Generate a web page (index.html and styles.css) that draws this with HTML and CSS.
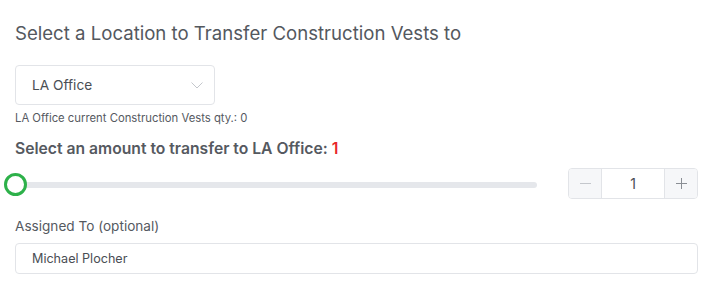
FILE: index.html
```html
<!DOCTYPE html>
<html>
<head>
<meta charset="utf-8">
<link rel="stylesheet" href="styles.css">
</head>
<body>
<div class="page">
  <h2 class="title">Select a Location to Transfer Construction Vests to</h2>
  <div class="select">
    <span class="select-value">LA Office</span>
    <svg class="chevron" width="12" height="7" viewBox="0 0 12 7"><path d="M0.5 0.5 L6 6 L11.5 0.5" fill="none" stroke="#c4c7cc" stroke-width="1"/></svg>
  </div>
  <div class="helper">LA Office current Construction Vests qty.: 0</div>
  <div class="amount-label">Select an amount to transfer to LA Office: <span class="red">1</span></div>
  <div class="slider-row">
    <div class="slider">
      <div class="track"></div>
      <div class="handle"></div>
    </div>
    <div class="stepper">
      <div class="step-btn"><span class="minus"></span></div>
      <div class="step-value">1</div>
      <div class="step-btn"><span class="plus"></span></div>
    </div>
  </div>
  <div class="field-label">Assigned To (optional)</div>
  <div class="text-input">Michael Plocher</div>
</div>
</body>
</html>
```
FILE: styles.css
```css
html, body {
  margin: 0;
  padding: 0;
  background: #ffffff;
}
body {
  font-family: Inter, "Liberation Sans", Arial, sans-serif;
  color: #55595f;
}
.page {
  padding: 0 9px 0 15px;
  display: flex;
  flex-direction: column;
}
.title {
  margin: 21px 0 0 0;
  font-size: 18.6px;
  font-weight: 400;
  line-height: 24px;
  color: #54585e;
}
.select {
  margin-top: 20px;
  width: 200px;
  height: 40px;
  box-sizing: border-box;
  border: 1px solid #e2e4e8;
  border-radius: 4px;
  display: flex;
  align-items: center;
  justify-content: space-between;
  padding: 0 11px 0 16px;
}
.select-value {
  font-size: 13.7px;
  color: #4a4e54;
}
.chevron {
  display: block;
}
.helper {
  margin-top: 6px;
  font-size: 11.3px;
  line-height: 14px;
  color: #55595f;
}
.amount-label {
  margin-top: 14px;
  font-size: 15.7px;
  font-weight: 600;
  line-height: 20px;
  color: #55595f;
}
.red {
  color: #e8262b;
}
.slider-row {
  margin-top: 9px;
  display: flex;
  align-items: center;
  gap: 31px;
}
.slider {
  position: relative;
  flex: 1;
  height: 31px;
  display: flex;
  align-items: center;
}
.track {
  width: 100%;
  height: 6px;
  border-radius: 3px;
  background: #e5e7eb;
  margin-top: 2px;
}
.handle {
  position: absolute;
  left: -11px;
  top: 5px;
  width: 17px;
  height: 17px;
  border: 3px solid #2db14a;
  border-radius: 50%;
  background: #ffffff;
}
.stepper {
  display: flex;
  width: 130px;
  height: 31px;
  box-sizing: border-box;
  border: 1px solid #e2e4e8;
  border-radius: 4px;
  overflow: hidden;
}
.step-btn {
  width: 32px;
  background: #f6f7f9;
  display: flex;
  align-items: center;
  justify-content: center;
}
.step-value {
  flex: 1;
  border-left: 1px solid #e2e4e8;
  border-right: 1px solid #e2e4e8;
  display: flex;
  align-items: center;
  justify-content: center;
  font-size: 14px;
  color: #4a4e54;
}
.minus {
  width: 11px;
  height: 1px;
  background: #c4c7cc;
}
.plus {
  position: relative;
  width: 11px;
  height: 11px;
}
.plus::before, .plus::after {
  content: "";
  position: absolute;
  background: #8a8e94;
}
.plus::before {
  left: 0;
  top: 5px;
  width: 11px;
  height: 1px;
}
.plus::after {
  left: 5px;
  top: 0;
  width: 1px;
  height: 11px;
}
.field-label {
  margin-top: 18px;
  font-size: 13.6px;
  line-height: 18px;
  color: #55595f;
}
.text-input {
  margin-top: 8px;
  height: 31px;
  box-sizing: border-box;
  border: 1px solid #e2e4e8;
  border-radius: 4px;
  padding: 0 16px;
  display: flex;
  align-items: center;
  font-size: 12.6px;
  color: #4a4e54;
}
```
